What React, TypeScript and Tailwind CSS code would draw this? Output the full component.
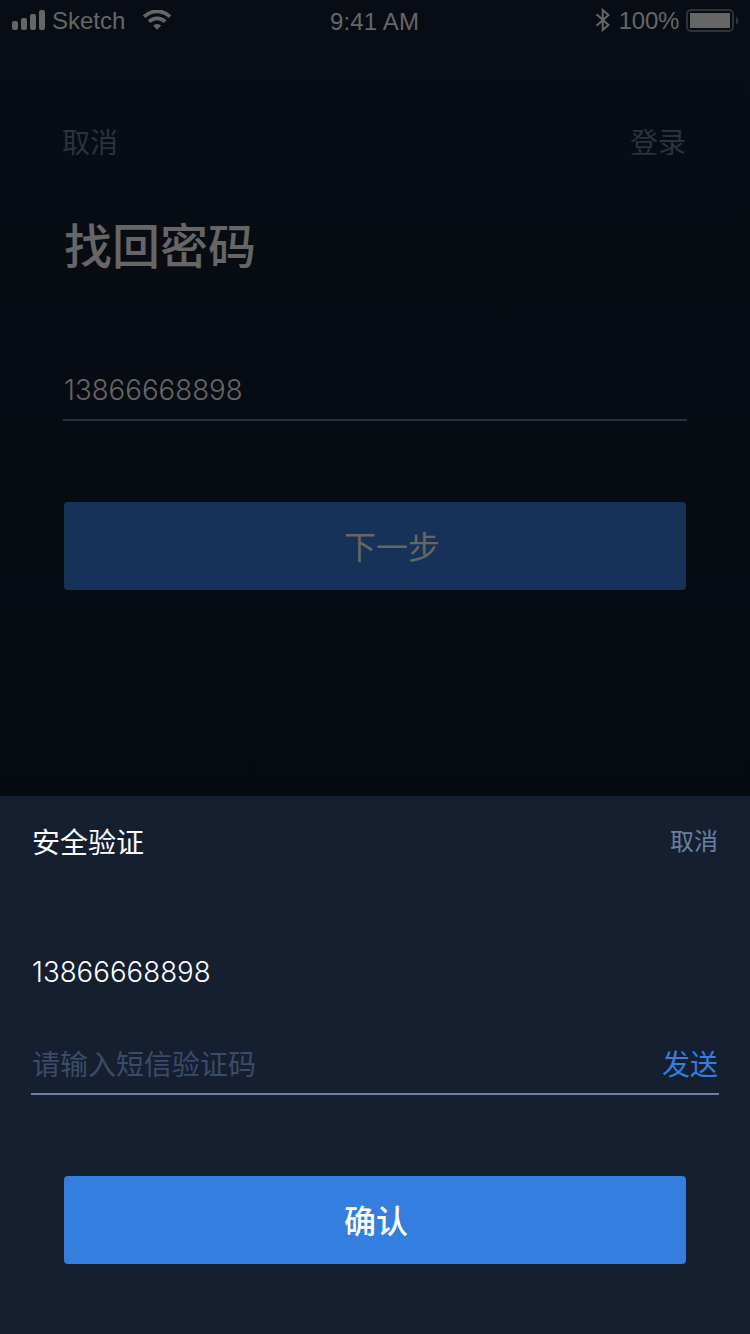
function SignalBars() {
  return (
    <svg width="34" height="20" viewBox="0 0 34 20" fill="currentColor">
      <rect x="0" y="11" width="6" height="9" rx="2" />
      <rect x="9" y="8" width="6" height="12" rx="2" />
      <rect x="18" y="4" width="6" height="16" rx="2" />
      <rect x="27" y="0" width="6" height="20" rx="2" />
    </svg>
  );
}

function Wifi() {
  return (
    <svg width="30" height="20" viewBox="0 0 30 20" fill="none" stroke="currentColor" strokeWidth="3.7">
      <path d="M1.2 6.6a18.4 18.4 0 0 1 25.8 0" />
      <path d="M6 11.6a11.6 11.6 0 0 1 16.2 0" />
      <path d="M14.1 19.8l-4-4.2a5.8 5.8 0 0 1 8 0z" fill="currentColor" stroke="none" />
    </svg>
  );
}

function Bluetooth() {
  return (
    <svg width="16" height="24" viewBox="0 0 16 24" fill="none" stroke="currentColor" strokeWidth="2">
      <path d="M1.5 6.2L13.5 17l-5.8 5V2l5.8 5L1.5 17.8" />
    </svg>
  );
}

function Battery() {
  return (
    <svg width="54" height="24" viewBox="0 0 54 24">
      <rect x="1" y="1" width="46" height="21" rx="4" fill="none" stroke="#2d3138" strokeWidth="2" />
      <rect x="4" y="4" width="40" height="15" rx="0.5" fill="#666" />
      <path d="M50 8c3.4 1.2 3.4 6.3 0 7.5z" fill="#2d3138" />
    </svg>
  );
}

export default function App() {
  return (
    <div className="flex h-[1334px] w-[750px] flex-col overflow-hidden bg-[#151f2f] font-['Liberation_Sans','Noto_Sans_CJK_SC',sans-serif]">
      <main className="flex h-[796px] flex-col bg-linear-to-b from-[#080d15] to-[#060a11]">
        <header className="grid h-10 grid-cols-3 items-center pr-[10px] pl-3 text-[24px] leading-[36px] text-[#666]">
          <div className="flex items-center">
            <SignalBars />
            <span className="ml-[6px] pt-[2px]">Sketch</span>
            <span className="ml-[18px]"><Wifi /></span>
          </div>
          <span className="pt-1 pr-[3px] text-center tracking-[0.15px]">9:41 AM</span>
          <div className="flex items-center justify-end">
            <Bluetooth />
            <span className="mr-[7px] ml-2 pt-[2px] tracking-[-0.3px]">100%</span>
            <span className="pt-[2px]"><Battery /></span>
          </div>
        </header>

        <div className="flex flex-col px-16">
          <nav className="mt-[84px] flex h-10 items-center justify-between text-[28px] leading-10 text-[#2a323f]">
            <span className="-ml-[2px]">取消</span>
            <span>登录</span>
          </nav>
          <h1 className="mt-[51px] h-[66px] text-[48px] leading-[66px] font-medium text-[#666]">找回密码</h1>
          <div className="-mx-px mt-[89px] h-[51px] border-b-2 border-[#2a323f] pl-px font-['Inter'] text-[27.7px] leading-[41px] font-[350] text-[#666]">
            13866668898
          </div>
          <button className="mt-[81px] h-[88px] rounded bg-[#163259] pt-1 pl-[34px] text-[32px] leading-[84px] text-[#666]">下一步</button>
        </div>
      </main>

      <section className="flex flex-1 flex-col">
        <div className="flex h-[93px] items-center justify-between border-b-2 border-[#121c2b] px-8">
          <h2 className="pt-1 text-[28px] leading-10 text-white">安全验证</h2>
          <button className="pt-px text-[24px] leading-9 text-[#6b7fa0]">取消</button>
        </div>
        <p className="mt-[63px] h-10 px-8 font-['Inter'] text-[27.7px] leading-[41px] font-[350] text-white">13866668898</p>
        <div className="mx-[31px] mt-[52px] flex h-[51px] justify-between border-b-2 border-[#6b819e] px-px pt-[2px] text-[28px] leading-10">
          <span className="text-[#3a4c68]">请输入短信验证码</span>
          <span className="text-[#347ee0]">发送</span>
        </div>
        <button className="mx-16 mt-[81px] h-[88px] rounded bg-[#347ee0] pt-1 pl-[2px] text-[32px] leading-[84px] font-medium text-white">确认</button>
      </section>
    </div>
  );
}
